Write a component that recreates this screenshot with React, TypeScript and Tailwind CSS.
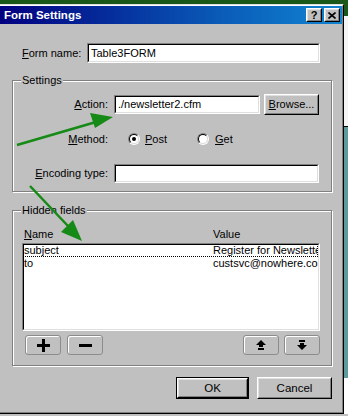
import React from "react";

const FONT = { fontFamily: '"Liberation Sans", Arial, sans-serif' };

function Sunken({ className = "", children }: { className?: string; children?: React.ReactNode }) {
  return (
    <div className={`border border-t-[#808080] border-l-[#808080] border-b-white border-r-white ${className}`}>
      <div className="h-full w-full border border-t-black border-l-black border-b-[#dfdfdf] border-r-[#dfdfdf] bg-white overflow-hidden">
        {children}
      </div>
    </div>
  );
}

function Raised({ className = "", children }: { className?: string; children?: React.ReactNode }) {
  return (
    <div className={`border border-t-white border-l-white border-b-black border-r-black bg-[#c0c0c0] ${className}`}>
      <div className="h-full w-full border border-t-[#dfdfdf] border-l-[#dfdfdf] border-b-[#808080] border-r-[#808080] flex items-center justify-center">
        {children}
      </div>
    </div>
  );
}

function Radio({ checked }: { checked?: boolean }) {
  return (
    <div className="w-[12px] h-[12px] rounded-full border border-t-[#808080] border-l-[#808080] border-b-white border-r-white shrink-0">
      <div className="w-full h-full rounded-full border border-t-black border-l-black border-b-[#dfdfdf] border-r-[#dfdfdf] bg-white flex items-center justify-center">
        {checked && <div className="w-[4px] h-[4px] rounded-full bg-black" />}
      </div>
    </div>
  );
}

function SmallBtn({ children }: { children?: React.ReactNode }) {
  return (
    <div className="w-[36px] h-[20px] rounded-[3px] border border-[#8c8c8c] shadow-[inset_1px_1px_0_#ffffff] flex items-center justify-center bg-[#c0c0c0]">
      {children}
    </div>
  );
}

export default function App() {
  return (
    <div className="relative w-[348px] h-[416px] overflow-hidden bg-[#c0c0c0] flex flex-col text-[11px] leading-[13px] text-black" style={FONT}>
      <div className="h-[4px] bg-[#1a581a] shrink-0" />
      <div className="flex shrink-0">
        {/* Dialog */}
        <div className="w-[344px] h-[410px] border-t border-r border-b border-t-[#dfdfdf] border-r-black border-b-black shrink-0">
          <div className="h-full flex flex-col border-t border-r border-b border-t-white border-r-[#808080] border-b-[#808080]">
            {/* Title bar */}
            <div className="h-[18px] shrink-0 flex items-center justify-between pl-[4px] pr-[2px] bg-[linear-gradient(to_right,#000080,#0a5cb8_65%,#1084d0)]">
              <span className="text-white font-bold text-[11.5px] leading-[14px]">Form Settings</span>
              <div className="flex gap-[2px]">
                <Raised className="w-[16px] h-[14px]">
                  <span className="font-bold text-[11px] leading-[10px]">?</span>
                </Raised>
                <Raised className="w-[16px] h-[14px]">
                  <svg width="8" height="7" viewBox="0 0 8 7">
                    <path d="M0.5 0.5 L7.5 6.5 M7.5 0.5 L0.5 6.5" stroke="black" strokeWidth="1.6" />
                  </svg>
                </Raised>
              </div>
            </div>

            {/* Form name */}
            <div className="mt-[19px] h-[20px] flex items-center">
              <span className="ml-[22px] w-[65px]"><span className="underline">F</span>orm name:</span>
              <Sunken className="w-[233px] h-[20px]">
                <div className="pl-[2px] h-full flex items-center">Table3FORM</div>
              </Sunken>
            </div>

            {/* Settings */}
            <div className="mt-[17px] ml-[12px] w-[320px] border border-[#808080] shadow-[inset_1px_1px_0_#ffffff,1px_1px_0_#ffffff] pb-[8px]">
              <div className="-mt-[7px] ml-[8px] px-[1px] w-fit bg-[#c0c0c0] leading-[13px]">Settings</div>
              <div className="mt-[7px] h-[21px] flex items-center">
                <span className="w-[95px] text-right"><span className="underline">A</span>ction:</span>
                <Sunken className="ml-[6px] w-[146px] h-[19px]">
                  <div className="pl-[2px] h-full flex items-center">./newsletter2.cfm</div>
                </Sunken>
                <Raised className="ml-[4px] w-[55px] h-[21px]">
                  <span><span className="underline">B</span>rowse...</span>
                </Raised>
              </div>
              <div className="mt-[13px] h-[22px] flex items-center">
                <span className="w-[95px] text-right"><span className="underline">M</span>ethod:</span>
                <div className="ml-[20px]"><Radio checked /></div>
                <span className="ml-[5px]"><span className="underline">P</span>ost</span>
                <div className="ml-[30px]"><Radio /></div>
                <span className="ml-[6px]"><span className="underline">G</span>et</span>
              </div>
              <div className="mt-[14px] h-[19px] flex items-center">
                <span className="w-[95px] text-right"><span className="underline">E</span>ncoding type:</span>
                <Sunken className="ml-[6px] w-[205px] h-[19px]" />
              </div>
            </div>

            {/* Hidden fields */}
            <div className="mt-[18px] ml-[12px] w-[320px] border border-[#808080] shadow-[inset_1px_1px_0_#ffffff,1px_1px_0_#ffffff] pb-[10px]">
              <div className="-mt-[7px] ml-[8px] px-[1px] w-fit bg-[#c0c0c0] leading-[13px]">Hidden fields</div>
              <div className="mt-[11px] ml-[11px] h-[13px] flex">
                <span className="w-[189px]"><span className="underline">N</span>ame</span>
                <span>Value</span>
              </div>
              <Sunken className="mt-[2px] ml-[9px] w-[298px] h-[88px]">
                <div className="h-[13px] -ml-[1px] -mt-[1px] border border-dotted border-black flex items-center whitespace-nowrap overflow-hidden">
                  <span className="w-[189px] shrink-0">subject</span>
                  <span>Register for Newsletter</span>
                </div>
                <div className="h-[13px] flex items-center whitespace-nowrap overflow-hidden">
                  <span className="w-[189px] shrink-0">to</span>
                  <span>custsvc@nowhere.com</span>
                </div>
              </Sunken>
              <div className="mt-[4px] ml-[12px] w-[295px] h-[20px] flex justify-between">
                <div className="flex gap-[6px]">
                  <SmallBtn>
                    <svg width="13" height="13" viewBox="0 0 13 13">
                      <path d="M5 0h3v5h5v3H8v5H5V8H0V5h5z" fill="black" />
                    </svg>
                  </SmallBtn>
                  <SmallBtn>
                    <svg width="13" height="3" viewBox="0 0 13 3">
                      <rect width="13" height="3" fill="black" />
                    </svg>
                  </SmallBtn>
                </div>
                <div className="flex gap-[5px]">
                  <SmallBtn>
                    <svg width="10" height="10" viewBox="0 0 10 10">
                      <path d="M5 0 L10 5 H7 V7 H3 V5 H0 Z" fill="black" />
                      <rect x="2" y="8" width="6" height="2" fill="black" />
                    </svg>
                  </SmallBtn>
                  <SmallBtn>
                    <svg width="10" height="10" viewBox="0 0 10 10">
                      <rect x="2" y="0" width="6" height="2" fill="black" />
                      <path d="M3 3 H7 V5 H10 L5 10 L0 5 H3 Z" fill="black" />
                    </svg>
                  </SmallBtn>
                </div>
              </div>
            </div>

            {/* OK / Cancel */}
            <div className="mt-[11px] h-[22px] flex justify-end pr-[10px] gap-[8px]">
              <div className="w-[73px] h-[22px] border border-black">
                <Raised className="w-full h-full">
                  <span className="text-[11.5px]">OK</span>
                </Raised>
              </div>
              <Raised className="w-[75px] h-[22px]">
                <span className="text-[11.5px]">Cancel</span>
              </Raised>
            </div>
          </div>
        </div>
        {/* Right desktop strip */}
        <div className="w-[4px] flex flex-col">
          <div className="h-[12px] bg-[#1a581a]" />
          <div className="h-[110px] bg-[#f4f4f4]" />
          <div className="h-[1px] bg-black" />
          <div className="h-[251px] bg-[#5c9c9c]" />
          <div className="h-[36px] bg-white" />
        </div>
      </div>

      {/* Green annotation arrows */}
      <svg className="absolute inset-0 pointer-events-none" width="348" height="416" viewBox="0 0 348 416">
        <line x1="17" y1="145" x2="96" y2="122" stroke="#168a16" strokeWidth="2.5" />
        <polygon points="113,117 90,113 95,128" fill="#168a16" />
        <line x1="30" y1="186" x2="68" y2="226" stroke="#168a16" strokeWidth="2.5" />
        <polygon points="82,241 61,232 73,220" fill="#168a16" />
      </svg>
    </div>
  );
}
